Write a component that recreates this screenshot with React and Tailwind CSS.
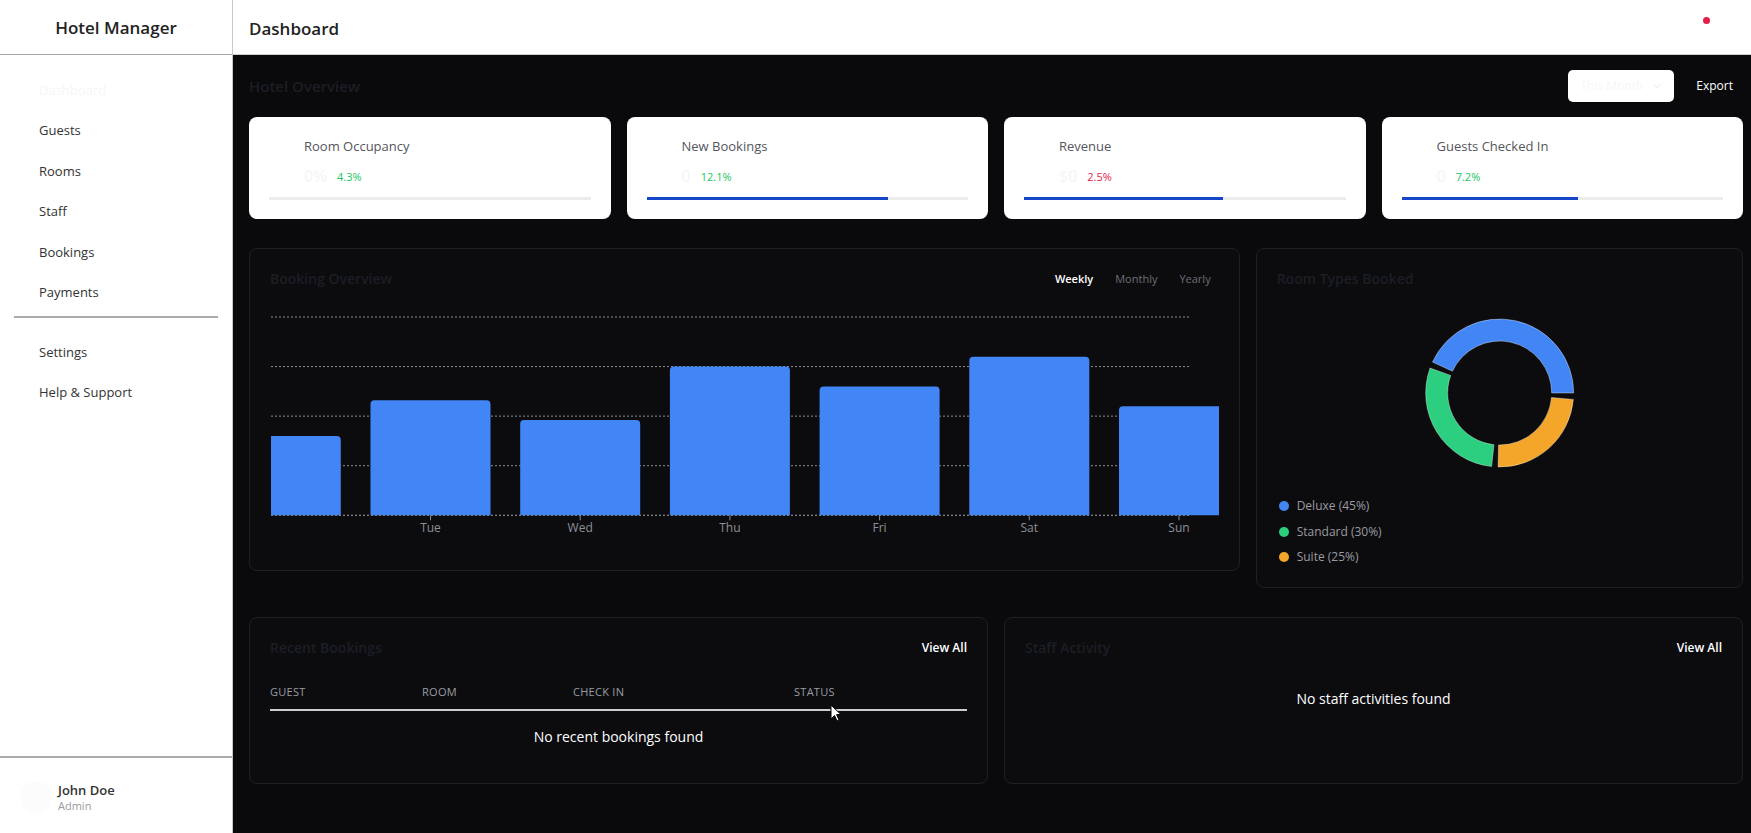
import React from 'react';

const navTop = ['Dashboard', 'Guests', 'Rooms', 'Staff', 'Bookings', 'Payments'];
const navBottom = ['Settings', 'Help & Support'];

const stats = [
  { title: 'Room Occupancy', value: '0%', change: '4.3%', up: true, progress: 0 },
  { title: 'New Bookings', value: '0', change: '12.1%', up: true, progress: 75 },
  { title: 'Revenue', value: '$0', change: '2.5%', up: false, progress: 62 },
  { title: 'Guests Checked In', value: '0', change: '7.2%', up: true, progress: 55 },
];

const bookings = [
  { day: 'Mon', value: 40 },
  { day: 'Tue', value: 58 },
  { day: 'Wed', value: 48 },
  { day: 'Thu', value: 75 },
  { day: 'Fri', value: 65 },
  { day: 'Sat', value: 80 },
  { day: 'Sun', value: 55 },
];

const roomTypes = [
  { name: 'Deluxe', pct: 45, color: '#4285f4' },
  { name: 'Standard', pct: 30, color: '#2bcf7f' },
  { name: 'Suite', pct: 25, color: '#f4a62a' },
];

const BLUE = '#4285f4';

function barPath(x, y, w, h, r) {
  return `M${x} ${y + h} L${x} ${y + r} Q${x} ${y} ${x + r} ${y} L${x + w - r} ${y} Q${x + w} ${y} ${x + w} ${y + r} L${x + w} ${y + h} Z`;
}

function arcPath(cx, cy, r0, r1, a0, a1) {
  const rad = (a) => (a * Math.PI) / 180;
  const pt = (r, a) => [cx + r * Math.cos(rad(a)), cy - r * Math.sin(rad(a))];
  const large = a1 - a0 > 180 ? 1 : 0;
  const [x1, y1] = pt(r1, a0);
  const [x2, y2] = pt(r1, a1);
  const [x3, y3] = pt(r0, a1);
  const [x4, y4] = pt(r0, a0);
  return `M${x1} ${y1} A${r1} ${r1} 0 ${large} 0 ${x2} ${y2} L${x3} ${y3} A${r0} ${r0} 0 ${large} 1 ${x4} ${y4} Z`;
}

const Sidebar = () => (
  <aside className="w-[233px] shrink-0 h-full bg-white border-r border-[#c8c8c8] flex flex-col">
    <div className="h-[55px] shrink-0 border-b border-[#a3a3a3] flex items-center justify-center pt-[2px]">
      <span className="text-[17px] font-semibold text-[#232323]">Hotel Manager</span>
    </div>
    <nav className="pt-[15px] px-[14px]">
      {navTop.map((item, i) => (
        <div
          key={item}
          className={`h-[40.5px] flex items-center px-[25px] text-[13px] ${i === 0 ? 'text-[#f6f6f6]' : 'text-[#333333]'}`}
        >
          {item}
        </div>
      ))}
      <div className="mt-[3px] h-[2px] bg-[#ababab]" />
      <div className="mt-[14px]">
        {navBottom.map((item) => (
          <div key={item} className="h-[40.5px] flex items-center px-[25px] text-[13px] text-[#333333]">
            {item}
          </div>
        ))}
      </div>
    </nav>
    <div className="mt-auto h-[77px] border-t-2 border-[#ababab] flex items-center gap-[6px] pl-5 pt-[3px]">
      <div className="w-8 h-8 rounded-full bg-[#fcfcfc]" />
      <div>
        <p className="text-[13px] leading-[18px] font-semibold text-[#333333]">John Doe</p>
        <p className="text-[11px] leading-[14px] text-[#9a9a9a]">Admin</p>
      </div>
    </div>
  </aside>
);

const StatCard = ({ s }) => (
  <div className="bg-white rounded-lg px-5 pt-5 pb-[19px]">
    <div className="flex gap-3">
      <div className="w-[23px] h-[23px] shrink-0" />
      <div>
        <p className="text-[13px] leading-[18px] text-[#55555c]">{s.title}</p>
        <div className="mt-[10px] h-[22px] flex items-center gap-[10px]">
          <span className="text-base leading-none font-semibold text-[#f6f6f6]">{s.value}</span>
          <span className={`text-[11px] leading-none ${s.up ? 'text-[#22c55e]' : 'text-[#e11d48]'}`}>{s.change}</span>
        </div>
      </div>
    </div>
    <div className="mt-[10px] h-[3px] bg-[#ececec]">
      <div className="h-full bg-[#1546c8]" style={{ width: `${s.progress}%` }} />
    </div>
  </div>
);

const BarChart = () => {
  const base = 215.3;
  const top = 17;
  const scale = (base - top) / 100;
  const grid = [0, 1, 2, 3, 4].map((k) => top + k * 49.57);
  return (
    <svg width="949" height="250" className="block">
      <defs>
        <clipPath id="plot">
          <rect x="1" y="0" width="948" height="250" />
        </clipPath>
      </defs>
      {grid.map((y) => (
        <line key={y} x1="1" x2="920" y1={y} y2={y} stroke="#8a8d94" strokeDasharray="2 2" />
      ))}
      <g clipPath="url(#plot)">
        {bookings.map((b, i) => {
          const cx = 10.8 + i * 149.7;
          const h = b.value * scale;
          return <path key={b.day} d={barPath(cx - 60, base - h, 120, h, 4)} fill={BLUE} />;
        })}
      </g>
      <line x1="1" x2="920" y1={base} y2={base} stroke="#8a8d94" strokeDasharray="2 2" strokeOpacity="0.6" />
      {bookings.slice(1).map((b, i) => {
        const cx = 10.8 + (i + 1) * 149.7;
        return (
          <g key={b.day}>
            <line x1={cx} x2={cx} y1={base} y2={base + 5} stroke="#8a8d94" />
            <text x={cx} y="232" textAnchor="middle" fontSize="12" fill="#8d9097">
              {b.day}
            </text>
          </g>
        );
      })}
    </svg>
  );
};

const Donut = () => {
  const pad = 5;
  const total = 360 - pad * roomTypes.length;
  let start = 0;
  const arcs = roomTypes.map((r) => {
    const a0 = start;
    const a1 = start + (r.pct / 100) * total;
    start = a1 + pad;
    return { ...r, d: arcPath(222.5, 96, 52, 74, a0, a1) };
  });
  return (
    <svg viewBox="0 0 445 192" width="100%" height="192" className="block">
      {arcs.map((a) => (
        <path key={a.name} d={a.d} fill={a.color} stroke="#ffffff" strokeOpacity="0.45" strokeWidth="0.8" />
      ))}
    </svg>
  );
};

const Panel = ({ className = '', children }) => (
  <div className={`rounded-lg border border-[#1f2025] bg-[#0c0c0f] p-5 ${className}`}>{children}</div>
);

const PanelTitle = ({ children }) => (
  <h3 className="text-sm leading-5 font-semibold text-[#1b1e25]">{children}</h3>
);

export default function App() {
  return (
    <div className="relative flex h-screen w-full overflow-hidden font-['Open_Sans','Noto_Sans',sans-serif]">
      <Sidebar />

      <div className="flex-1 min-w-0 flex flex-col">
        <header className="h-[55px] shrink-0 bg-white border-b border-[#cdcdcd] flex items-center justify-between pl-4 pr-[35px] pt-[3px]">
          <h1 className="text-[17px] font-semibold text-[#232323]">Dashboard</h1>
          <div className="relative w-5 h-5">
            <span className="absolute right-[6px] top-[-2px] w-[7px] h-[7px] rounded-full bg-[#e11d48]" />
          </div>
        </header>

        <main className="flex-1 min-h-0 bg-[#0a0a0c] pt-[15px] pl-4 pr-2">
          <div className="h-8 mb-[15px] flex items-center justify-between">
            <h2 className="text-[15px] font-semibold text-[#1b1e25]">Hotel Overview</h2>
            <div className="flex items-center gap-3">
              <button
                type="button"
                className="w-[106px] h-8 rounded-[5px] bg-white flex items-center justify-between px-3 text-[12px] text-[#f7f7f7]"
              >
                This Month
                <svg width="10" height="10" viewBox="0 0 10 10">
                  <path d="M2 3.5 L5 6.5 L8 3.5" fill="none" stroke="#f2f2f2" strokeWidth="1.4" />
                </svg>
              </button>
              <button type="button" className="h-8 px-[10px] text-[12px] text-white">
                Export
              </button>
            </div>
          </div>

          <div className="grid grid-cols-4 gap-4">
            {stats.map((s) => (
              <StatCard key={s.title} s={s} />
            ))}
          </div>

          <div className="mt-[29px] grid grid-cols-3 gap-4 items-start">
            <Panel className="col-span-2">
              <div className="h-5 flex items-center justify-between">
                <PanelTitle>Booking Overview</PanelTitle>
                <div className="flex -mr-[3px]">
                  <button type="button" className="px-[11px] text-[11px] font-semibold text-white">
                    Weekly
                  </button>
                  <button type="button" className="px-[11px] text-[11px] text-[#6b6e75]">
                    Monthly
                  </button>
                  <button type="button" className="px-[11px] text-[11px] text-[#6b6e75]">
                    Yearly
                  </button>
                </div>
              </div>
              <div className="mt-[11px] h-[250px] overflow-hidden">
                <BarChart />
              </div>
            </Panel>

            <Panel>
              <PanelTitle>Room Types Booked</PanelTitle>
              <div className="mt-2 h-[192px]">
                <Donut />
              </div>
              <div className="mt-[7px] flex flex-col gap-[5.5px]">
                {roomTypes.map((r) => (
                  <div key={r.name} className="h-5 flex items-center gap-2 pl-[2px]">
                    <span className="w-[10px] h-[10px] rounded-full" style={{ backgroundColor: r.color }} />
                    <span className="text-[12px] text-[#9a9aa0]">
                      {r.name} ({r.pct}%)
                    </span>
                  </div>
                ))}
              </div>
            </Panel>
          </div>

          <div className="mt-[29px] grid grid-cols-2 gap-4">
            <Panel>
              <div className="h-5 flex items-center justify-between">
                <PanelTitle>Recent Bookings</PanelTitle>
                <button type="button" className="text-[12px] font-semibold text-white">
                  View All
                </button>
              </div>
              <div className="mt-[26px] grid grid-cols-[152px_151px_221px_1fr] pb-[9px] border-b-2 border-[#cdcdd0] text-[11px] leading-4 uppercase tracking-wide text-[#9a9ca3]">
                <span>Guest</span>
                <span>Room</span>
                <span>Check In</span>
                <span>Status</span>
              </div>
              <p className="py-4 text-center text-sm leading-5 text-white">No recent bookings found</p>
            </Panel>

            <Panel>
              <div className="h-5 flex items-center justify-between">
                <PanelTitle>Staff Activity</PanelTitle>
                <button type="button" className="text-[12px] font-semibold text-white">
                  View All
                </button>
              </div>
              <p className="mt-[31px] text-center text-sm leading-5 text-white">No staff activities found</p>
            </Panel>
          </div>
        </main>
      </div>

      <svg className="absolute left-[830px] top-[704px]" width="12" height="18" viewBox="0 0 12 18">
        <path d="M1 1 L1 15 L4.5 11.5 L7 17 L9 16 L6.6 10.6 L11 10.6 Z" fill="#ffffff" stroke="#000000" strokeWidth="1" />
      </svg>
    </div>
  );
}
